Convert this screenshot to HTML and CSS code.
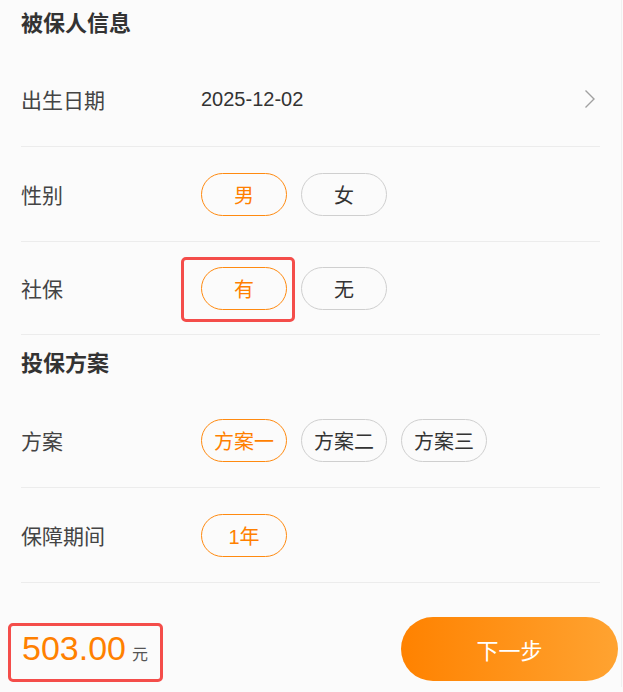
FILE: index.html
```html
<!DOCTYPE html>
<html lang="zh-CN">
<head>
    <meta charset="UTF-8">
    <meta name="viewport" content="width=device-width, initial-scale=1.0">
    <title>投保信息</title>
    <link rel="stylesheet" href="styles.css">
</head>
<body>

    <div class="page">
        <div class="form">
            <div class="section-title first">被保人信息</div>

            <div class="row">
                <div class="label">出生日期</div>
                <div class="value">2025-12-02</div>
                <svg class="arrow" width="12" height="20" viewBox="0 0 12 20">
                    <polyline points="1.5,1.5 10,10 1.5,18.5" fill="none" stroke="#a0a0a0" stroke-width="1.4" />
                </svg>
            </div>

            <div class="row">
                <div class="label">性别</div>
                <div class="options">
                    <span class="pill active">男</span>
                    <span class="pill">女</span>
                </div>
            </div>

            <div class="row short">
                <div class="label">社保</div>
                <div class="options">
                    <span class="pill active marked">有</span>
                    <span class="pill">无</span>
                </div>
            </div>

            <div class="section-title">投保方案</div>

            <div class="row">
                <div class="label">方案</div>
                <div class="options">
                    <span class="pill active">方案一</span>
                    <span class="pill">方案二</span>
                    <span class="pill">方案三</span>
                </div>
            </div>

            <div class="row">
                <div class="label">保障期间</div>
                <div class="options">
                    <span class="pill active">1年</span>
                </div>
            </div>
        </div>

        <div class="footer">
            <div class="price">
                <span class="amount">503.00</span>
                <span class="unit">元</span>
            </div>
            <button class="next-button">下一步</button>
        </div>
    </div>

</body>
</html>
```

FILE: styles.css
```css
body {
    margin: 0;
    background-color: #fbfbfb;
    font-family: "Liberation Sans", "Noto Sans CJK SC", sans-serif;
    color: #333;
    overflow: hidden;
}
.page {
    width: 621px;
    height: 692px;
    border-right: 1px solid #f0f0f0;
}
.form {
    padding: 0 21px 0 21px;
}
.section-title {
    height: 58px;
    line-height: 58px;
    font-size: 22px;
    font-weight: bold;
    color: #333;
}
.section-title.first {
    height: 57px;
    line-height: 57px;
    margin-top: -5px;
}
.row {
    display: flex;
    align-items: center;
    height: 95px;
    box-sizing: border-box;
    border-bottom: 1px solid #ececec;
}
.row.short {
    height: 93px;
}
.label {
    width: 180px;
    font-size: 21px;
    color: #444;
}
.value {
    flex: 1;
    font-size: 20px;
    color: #333;
}
.arrow {
    margin-right: 4px;
}
.options {
    display: flex;
    gap: 14px;
}
.pill {
    position: relative;
    display: flex;
    align-items: center;
    justify-content: center;
    width: 86px;
    height: 43px;
    box-sizing: border-box;
    border: 1px solid #cfcfcf;
    border-radius: 22px;
    font-size: 20px;
    color: #333;
}
.pill.active {
    border-color: #ff8a10;
    color: #ff8000;
}
/* cadre rouge d'annotation */
.pill.marked::after {
    content: "";
    position: absolute;
    left: -21px;
    right: -9px;
    top: -11px;
    bottom: -13px;
    border: 3px solid #f44d4a;
    border-radius: 5px;
}
.footer {
    display: flex;
    justify-content: space-between;
    align-items: center;
    padding: 34px 3px 11px 22px;
}
.price {
    position: relative;
    display: flex;
    align-items: baseline;
    gap: 6px;
    line-height: 40px;
    margin-top: 4px;
}
.price::after {
    content: "";
    position: absolute;
    left: -14px;
    right: -15px;
    top: -5px;
    bottom: -7px;
    border: 3px solid #f44d4a;
    border-radius: 5px;
}
.amount {
    font-size: 34px;
    color: #ff8000;
}
.unit {
    font-size: 16px;
    color: #555;
}
.next-button {
    width: 217px;
    height: 64px;
    border: none;
    border-radius: 32px;
    background: linear-gradient(90deg, #ff8200, #ffa331);
    color: white;
    font-family: "Noto Sans CJK SC", sans-serif;
    font-size: 22px;
    cursor: pointer;
}
```
